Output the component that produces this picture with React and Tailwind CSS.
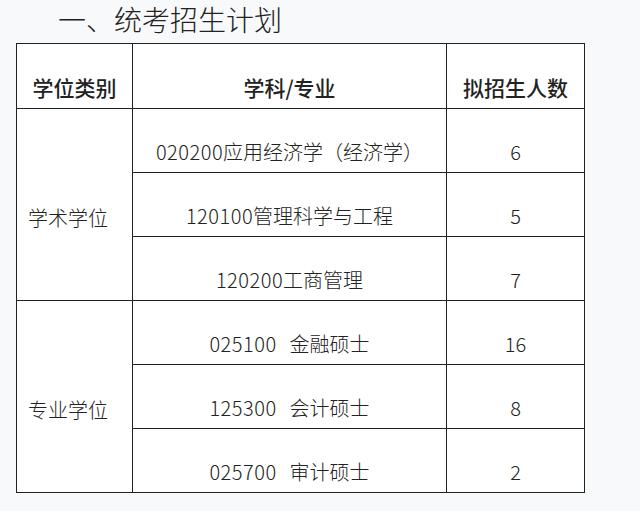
const rows = [
  { code: '020200', name: '应用经济学（经济学）', gap: false, num: '6' },
  { code: '120100', name: '管理科学与工程', gap: false, num: '5' },
  { code: '120200', name: '工商管理', gap: false, num: '7' },
  { code: '025100', name: '金融硕士', gap: true, num: '16' },
  { code: '125300', name: '会计硕士', gap: true, num: '8' },
  { code: '025700', name: '审计硕士', gap: true, num: '2' },
]

const cjk = { fontFamily: '"Noto Sans CJK SC", "Noto Sans", sans-serif' }

const App = () => {
  return (
    <div className="w-[640px] h-[511px] bg-[#f8f9fb] text-[#222]" style={cjk}>
      <div className="h-[43px] pl-[58px] pt-[3px] text-[28px] leading-[32px] font-light">一、统考招生计划</div>
      <table className="ml-[16px] border-collapse bg-white">
        <tbody>
          <tr className="h-[65px]">
            <td className="w-[116px] border border-[#222] text-center align-top pt-[31px] text-[21px] leading-[24px] font-medium">学位类别</td>
            <td className="w-[314px] border border-[#222] text-center align-top pt-[31px] text-[21px] leading-[24px] font-medium">学科/专业</td>
            <td className="w-[138px] border border-[#222] text-center align-top pt-[31px] text-[21px] leading-[24px] font-medium">拟招生人数</td>
          </tr>
          {rows.map((r, i) => (
            <tr key={r.code} className="h-[64px]">
              {i % 3 === 0 && (
                <td rowSpan={3} className="border border-[#222] align-top pt-[97px] pl-[11px] text-[20px] leading-[24px] font-light">
                  {i === 0 ? '学术学位' : '专业学位'}
                </td>
              )}
              <td className="border border-[#222] text-center align-top pt-[31px] text-[20px] leading-[24px] font-light whitespace-nowrap">
                <span className="tracking-[0.5px]">{r.code}</span>
                <span className={r.gap ? 'ml-[13px]' : ''}>{r.name}</span>
              </td>
              <td className="border border-[#222] text-center align-top pt-[31px] text-[20px] leading-[24px] font-light">{r.num}</td>
            </tr>
          ))}
        </tbody>
      </table>
    </div>
  )
}

export default App
